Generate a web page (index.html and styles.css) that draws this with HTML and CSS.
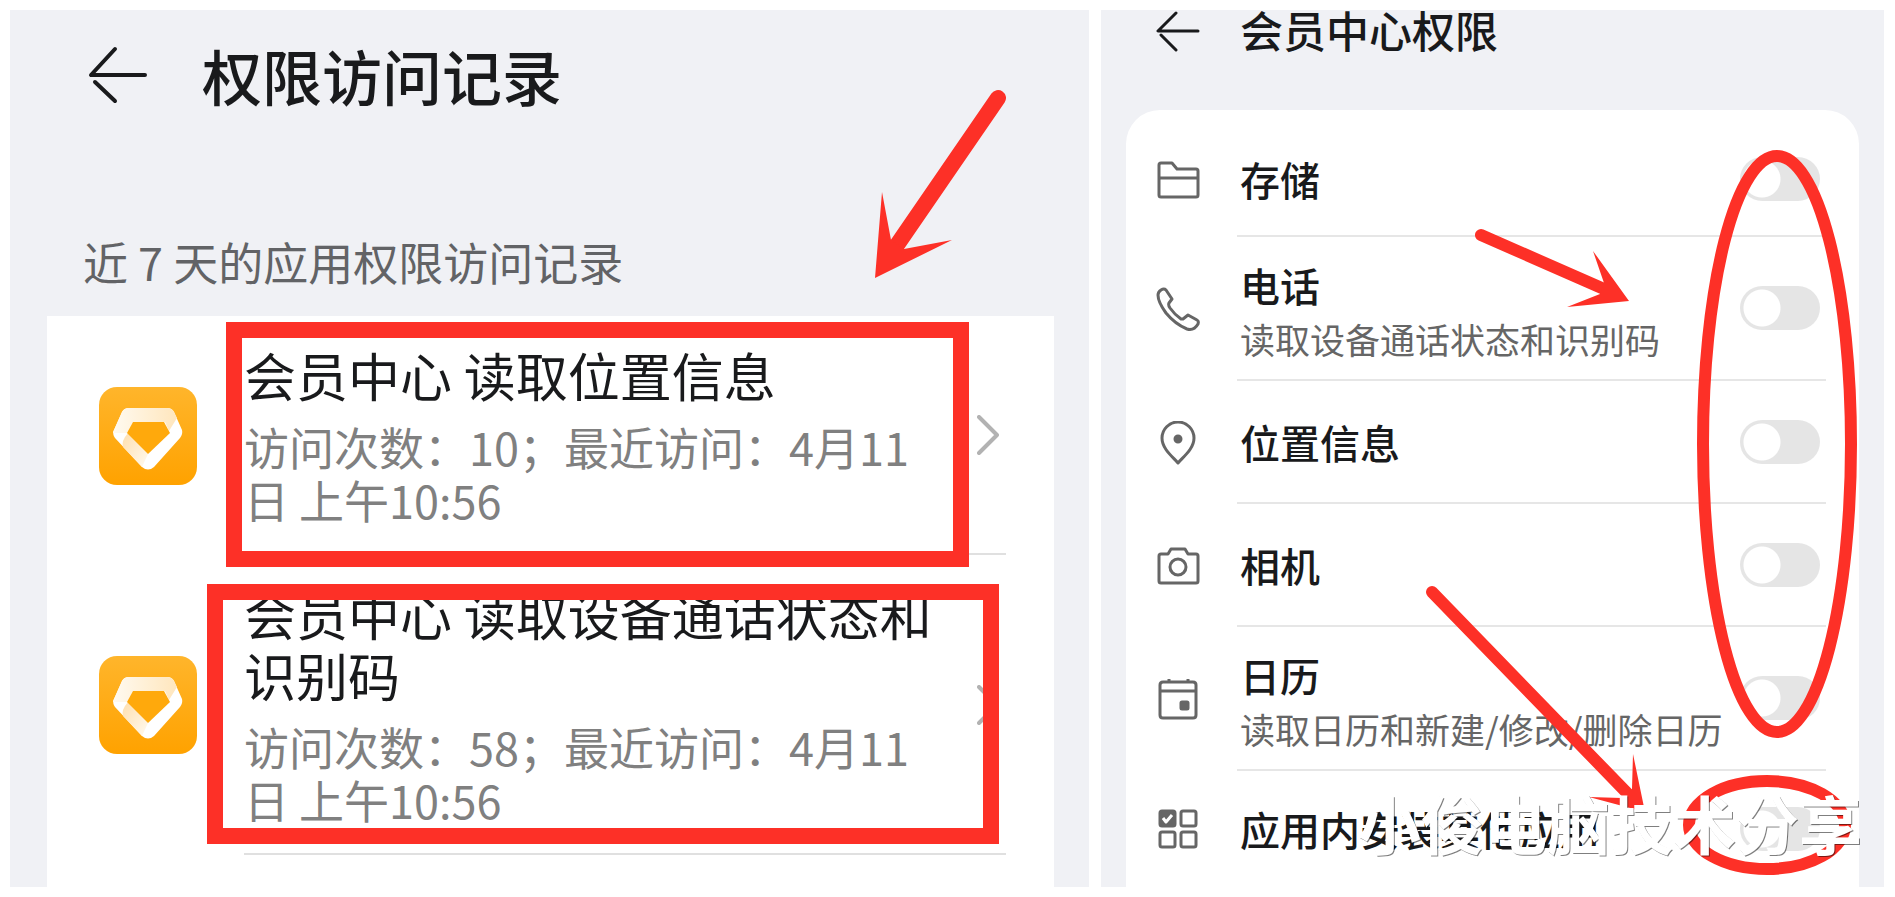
FILE: index.html
```html
<!DOCTYPE html>
<html lang="zh-CN">
<head>
    <meta charset="UTF-8">
    <meta name="viewport" content="width=device-width, initial-scale=1.0">
    <title>权限访问记录</title>
    <link rel="stylesheet" href="styles.css">
</head>
<body>
    <!-- shared app icon -->
    <svg class="defs" width="0" height="0" aria-hidden="true">
        <defs>
            <linearGradient id="appBg" x1="0" y1="0" x2="0" y2="1">
                <stop offset="0" stop-color="#ffb52b"/>
                <stop offset="1" stop-color="#ffa200"/>
            </linearGradient>
            <linearGradient id="gemTop" x1="0" y1="0" x2="1" y2="0">
                <stop offset="0" stop-color="#fffaf0"/>
                <stop offset="1" stop-color="#ffe6bd"/>
            </linearGradient>
            <linearGradient id="gemLeft" x1="0" y1="0" x2="1" y2="1">
                <stop offset="0" stop-color="#ffdfae"/>
                <stop offset="1" stop-color="#fffaf0"/>
            </linearGradient>
        </defs>
        <symbol id="app" viewBox="0 0 98 98">
            <rect width="98" height="98" rx="18" fill="url(#appBg)"/>
            <path d="M30 21H68Q73 21 75 25L83 43Q84 47 81 51L55 80Q49 85 43 80L16 51Q13 47 15 43L23 25Q25 21 30 21Z" fill="#fff"/>
            <path d="M30 21H68Q73 21 75 25L78 31L70 44L66 35H34L29 46L14 46Q14 44 15 43L23 25Q25 21 30 21Z" fill="url(#gemTop)"/>
            <path d="M29 46L49 67L43 80L24 60Q22 54 29 46Z" fill="url(#gemLeft)"/>
            <path d="M34 35H65L71 46L49 67L28 46Z" fill="#ffa90c"/>
        </symbol>
    </svg>

    <main class="screens">
        <section class="screen records">
            <header class="records-header">
                <button class="back" aria-label="返回">
                    <svg width="60" height="58" viewBox="0 0 60 58"><path d="M27 3L3 29H57M7 36L27 55"/></svg>
                </button>
                <h1>权限访问记录</h1>
            </header>
            <p class="hint">近 7 天的应用权限访问记录</p>
            <div class="record-list">
                <a class="record" href="#">
                    <svg class="app-icon"><use href="#app"/></svg>
                    <div class="record-body">
                        <div class="record-text">
                            <h2>会员中心 读取位置信息</h2>
                            <p>访问次数：10；最近访问：4月11日 上午10:56</p>
                        </div>
                        <svg class="chevron" viewBox="0 0 22 40"><path d="M2 2L20 20L2 38"/></svg>
                    </div>
                </a>
                <a class="record" href="#">
                    <svg class="app-icon"><use href="#app"/></svg>
                    <div class="record-body">
                        <div class="record-text">
                            <h2>会员中心 读取设备通话状态和识别码</h2>
                            <p>访问次数：58；最近访问：4月11日 上午10:56</p>
                        </div>
                        <svg class="chevron" viewBox="0 0 22 40"><path d="M2 2L20 20L2 38"/></svg>
                    </div>
                </a>
            </div>
            <svg class="marks" viewBox="10 10 1079 877" preserveAspectRatio="none" aria-hidden="true">
                <rect x="234" y="330" width="727" height="229" stroke-width="16"/>
                <rect x="215" y="592" width="776" height="244" stroke-width="16"/>
                <path d="M998 98L897 245" stroke-width="16"/>
                <path class="head" d="M875 278L882 192L891 240L904 249L952 240Z"/>
            </svg>
        </section>

        <section class="screen perms">
            <header class="perms-header">
                <button class="back" aria-label="返回">
                    <svg width="44" height="42" viewBox="0 0 44 42"><path d="M20 3L2 21H42M5 25L20 40"/></svg>
                </button>
                <h1>会员中心权限</h1>
            </header>
            <div class="perm-list">
                <div class="perm">
                    <svg class="perm-icon" viewBox="0 0 44 44"><path d="M5 5H16L21 11H40Q42 11 42 13V37Q42 39 40 39H5Q3 39 3 37V7Q3 5 5 5ZM3 20H42"/></svg>
                    <div class="perm-body">
                        <label for="storage">存储</label>
                        <input type="checkbox" role="switch" id="storage">
                    </div>
                </div>
                <div class="perm perm-tall">
                    <svg class="perm-icon" viewBox="0 0 44 44"><path d="M5 3Q8 1 10 3L16 12L13 16Q12 18 14 21Q19 28 25 32H27L32 28L41 33Q43 34 42 37Q38 44 31 42Q19 37 10 26Q2 15 2 8Q2 5 5 3Z"/></svg>
                    <div class="perm-body">
                        <label for="phone">电话<span>读取设备通话状态和识别码</span></label>
                        <input type="checkbox" role="switch" id="phone">
                    </div>
                </div>
                <div class="perm">
                    <svg class="perm-icon" viewBox="0 0 44 44"><path d="M22 42C17 36 6 28 6 17A16 16 0 0 1 38 17C38 28 27 36 22 42Z"/><circle class="solid" cx="22" cy="18" r="3"/></svg>
                    <div class="perm-body">
                        <label for="location">位置信息</label>
                        <input type="checkbox" role="switch" id="location">
                    </div>
                </div>
                <div class="perm">
                    <svg class="perm-icon" viewBox="0 0 44 44"><path d="M5 10H12L15 5H29L32 10H40Q42 10 42 12V37Q42 39 40 39H5Q3 39 3 37V12Q3 10 5 10Z"/><circle cx="22" cy="23" r="8"/></svg>
                    <div class="perm-body">
                        <label for="camera">相机</label>
                        <input type="checkbox" role="switch" id="camera">
                    </div>
                </div>
                <div class="perm perm-tall">
                    <svg class="perm-icon" viewBox="0 0 44 44"><path d="M7 5H37Q40 5 40 8V38Q40 41 37 41H7Q4 41 4 38V8Q4 5 7 5ZM4 14H40M13 2V5M32 2V5"/><rect class="solid" x="25" y="25" width="7" height="7" rx="1"/></svg>
                    <div class="perm-body">
                        <label for="calendar">日历<span>读取日历和新建/修改/删除日历</span></label>
                        <input type="checkbox" role="switch" id="calendar">
                    </div>
                </div>
                <div class="perm">
                    <svg class="perm-icon" viewBox="0 0 44 44"><rect class="solid" x="4" y="4" width="15" height="15" rx="2"/><rect x="25" y="4" width="15" height="15" rx="2"/><rect x="4" y="25" width="15" height="15" rx="2"/><rect x="25" y="25" width="15" height="15" rx="2"/><path class="tick" d="M7 11L10 15L16 8"/></svg>
                    <div class="perm-body">
                        <label for="install">应用内安装其他应用</label>
                        <input type="checkbox" role="switch" id="install">
                    </div>
                </div>
            </div>
            <svg class="marks" viewBox="1101 10 783 877" preserveAspectRatio="none" aria-hidden="true">
                <ellipse cx="1777" cy="444" rx="74" ry="288" stroke-width="12"/>
                <ellipse cx="1767" cy="825" rx="78" ry="44" stroke-width="12"/>
                <path d="M1481 235L1604 289" stroke-width="12"/>
                <path class="head" d="M1629 301L1593 251L1604 283L1600 294L1567 307Z"/>
                <path d="M1432 592L1629 795" stroke-width="12"/>
                <path class="head" d="M1645 812L1633 754L1632 789L1622 798L1589 797Z"/>
            </svg>
            <div class="watermark">小俊电脑技术分享</div>
        </section>
    </main>
</body>
</html>
```

FILE: styles.css
```css
* {
    box-sizing: border-box;
}
body {
    margin: 0;
    background: #fff;
    font-family: "Noto Sans CJK SC", sans-serif;
    color: #191a1c;
}
h1, h2, p {
    margin: 0;
}
.defs {
    position: absolute;
}
.screens {
    display: flex;
    gap: 12px;
    min-height: 100vh;
    padding: 10px 11px 10px 10px;
}
.screen {
    position: relative;
    display: flex;
    flex-direction: column;
    min-width: 0;
    background: #f0f1f5;
    overflow: hidden;
}
.records {
    flex: 1079 1 0;
}
.perms {
    flex: 783 1 0;
}
.back {
    display: flex;
    padding: 0;
    border: none;
    background: none;
    cursor: pointer;
}
.back path {
    fill: none;
    stroke: #191a1c;
    stroke-width: 4;
    stroke-linecap: round;
    stroke-linejoin: round;
}
.perms .back path {
    stroke-width: 3;
}
h1 {
    font-weight: 500;
}

/* access records */
.records-header {
    display: flex;
    align-items: center;
    gap: 54px;
    padding: 21px 48px 0 78px;
}
.records-header h1 {
    font-size: 60px;
    line-height: 88px;
}
.hint {
    margin: 113px 48px 24px 73px;
    font-size: 45px;
    line-height: 60px;
    color: #626366;
}
.record-list {
    flex: 1;
    margin: 0 35px 0 37px;
    padding: 0 48px 0 52px;
    background: #fff;
}
.record {
    display: flex;
    align-items: center;
    gap: 47px;
    color: inherit;
    text-decoration: none;
}
.app-icon {
    flex: none;
    width: 98px;
    height: 98px;
}
.record-body {
    flex: 1;
    display: flex;
    align-items: center;
    justify-content: space-between;
    padding: 28px 7px 27px 0;
    border-bottom: 2px solid #e0e0e0;
}
.record-text {
    flex: 1;
    margin-right: 28px;
}
.record h2 {
    font-size: 52px;
    font-weight: 400;
    line-height: 61px;
}
.record p {
    margin-top: 15px;
    font-size: 45px;
    line-height: 53px;
    color: #808080;
}
.chevron {
    flex: none;
    width: 22px;
    height: 40px;
    fill: none;
    stroke: #b2b2b2;
    stroke-width: 4;
    stroke-linecap: round;
    stroke-linejoin: round;
}

/* app permissions */
.perms-header {
    display: flex;
    align-items: flex-start;
    gap: 40px;
    height: 42px;
    padding-left: 55px;
}
.perms-header h1 {
    font-size: 43px;
    line-height: 38px;
}
.perm-list {
    flex: 1;
    margin: 58px 25px 0;
    padding: 0 33px 0 30px;
    border-radius: 34px 34px 0 0;
    background: #fff;
}
.perm {
    display: flex;
    align-items: center;
    gap: 37px;
    min-height: 123px;
}
.perm-tall {
    min-height: 144px;
}
.perm:first-child {
    min-height: 127px;
    padding-top: 12px;
}
.perm:last-child {
    min-height: 116px;
}
.perm-icon {
    flex: none;
    width: 44px;
    height: 44px;
    fill: none;
    stroke: #666;
    stroke-width: 3;
    stroke-linejoin: round;
}
.perm-icon .solid {
    fill: #666;
}
.perm-icon .tick {
    stroke: #fff;
}
.perm-body {
    flex: 1;
    display: flex;
    align-items: center;
    justify-content: space-between;
    align-self: stretch;
    padding: 0 6px 0 3px;
    border-bottom: 2px solid #e6e6e6;
}
.perm:last-child .perm-body {
    border-bottom: none;
}
.perm label {
    font-size: 40px;
    font-weight: 500;
    line-height: 62px;
}
.perm label span {
    display: block;
    font-size: 35px;
    font-weight: 400;
    line-height: 46px;
    color: #666;
}
.perm input {
    appearance: none;
    flex: none;
    width: 80px;
    height: 44px;
    margin: 0;
    border-radius: 22px;
    background: radial-gradient(circle at 22px 22px, #fff 18px, #e5e5e5 19px);
    cursor: pointer;
}
.perm input:checked {
    background: radial-gradient(circle at 58px 22px, #fff 18px, #0a59f7 19px);
}

/* red marker strokes and watermark over the screens */
.marks {
    position: absolute;
    inset: 0;
    width: 100%;
    height: 100%;
    fill: none;
    stroke: #fd3027;
    stroke-linecap: round;
    pointer-events: none;
}
.marks .head {
    fill: #fd3027;
    stroke: none;
}
.watermark {
    position: absolute;
    right: 22px;
    bottom: 34px;
    font-size: 63px;
    font-weight: 700;
    line-height: 63px;
    color: #fff;
    text-shadow: 1px 1px 0 rgba(0, 0, 0, 0.5);
    white-space: nowrap;
    pointer-events: none;
}
```
